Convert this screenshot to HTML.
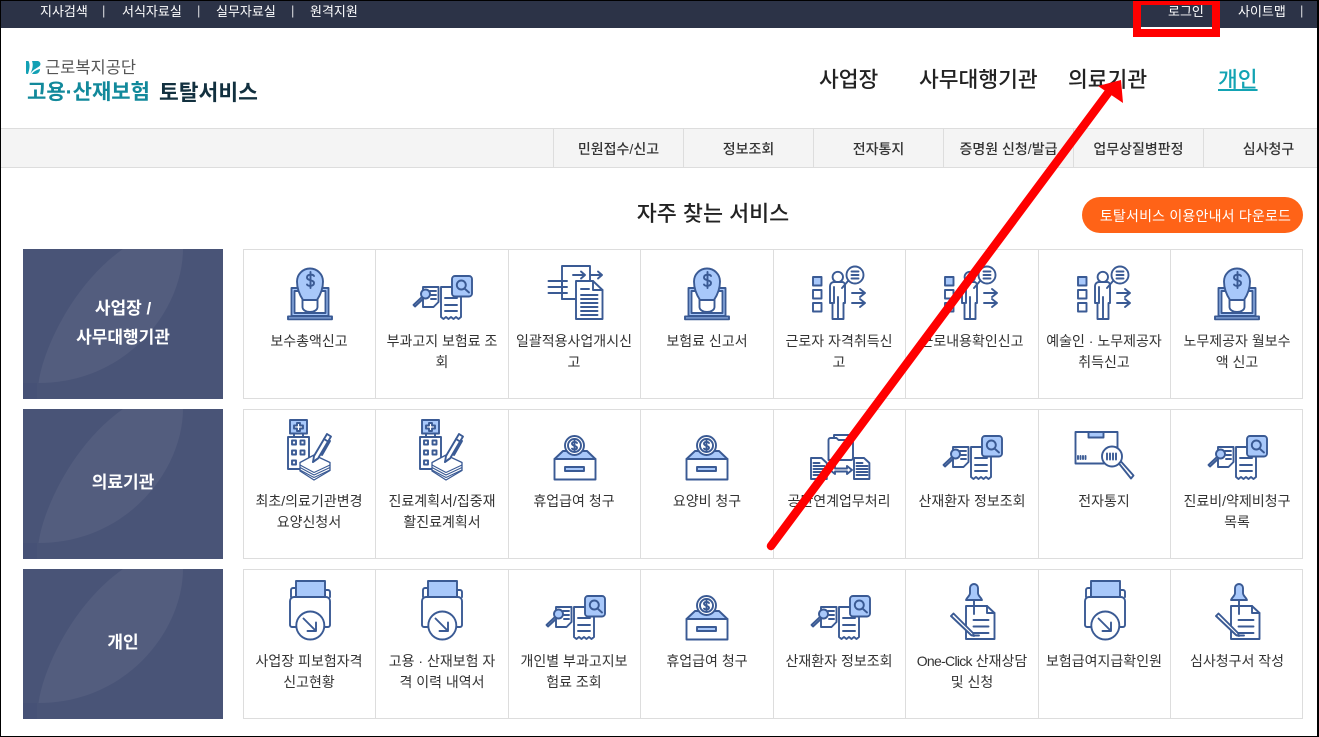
<!DOCTYPE html>
<html lang="ko"><head><meta charset="utf-8"><title>토탈서비스</title>
<style>
*{box-sizing:border-box;margin:0;padding:0}
html,body{width:1319px;height:737px;overflow:hidden;background:#fff}
body{position:relative;font-family:"Liberation Sans","Noto Sans CJK KR",sans-serif;color:#333}
.a{position:absolute;white-space:nowrap}
.top{left:0;top:0;width:1319px;height:28px;background:#2c3347}
.tt{color:#fff;font-size:13px;line-height:20px;top:1px}
.sp{font-size:13px;opacity:.8;top:1px}
.nav{font-size:21.5px;font-weight:500;color:#222;top:65px;line-height:30px}
.tabs{left:0;top:128px;width:1319px;height:40px;background:#f4f4f4;border-top:1px solid #ddd;border-bottom:1px solid #ddd}
.tab{top:129px;height:38px;line-height:38px;font-size:14px;font-weight:500;color:#333;text-align:center;width:130px;border-left:1px solid #ddd}
.panel{left:23px;width:200px;height:150px;background:#495477;color:#fff;font-size:17px;font-weight:700;text-align:center;line-height:29px}
.panel svg{position:absolute;left:0;top:0}
.panel div{position:absolute;left:0;width:200px;white-space:nowrap}
.row{left:243px;width:1060px;height:150px;border:1px solid #ddd;display:flex;background:#fff}
.c{flex:0 0 132px;border-right:1px solid #ddd;text-align:center;position:relative;font-size:14px;line-height:21px;color:#333}
.c:nth-child(even){flex-basis:133px}
.c:last-child{border-right:0;flex:1 1 auto}
.c svg{position:absolute;left:25.5px;top:7px}
.c p{position:absolute;left:-1px;width:132px;top:81px;white-space:nowrap}
.c:nth-child(even) p{left:0}
svg .s{fill:none;stroke:#3a5a94;stroke-width:1.9;stroke-linejoin:round;stroke-linecap:round}
svg .f{fill:#a8c8fa;stroke:#3a5a94;stroke-width:1.9;stroke-linejoin:round;stroke-linecap:round}
svg .w{fill:#fff;stroke:#3a5a94;stroke-width:1.9;stroke-linejoin:round;stroke-linecap:round}
</style></head><body>
<svg width="0" height="0" style="position:absolute">
<symbol id="bulb" viewBox="0 0 80 64">
<rect class="f" x="21.5" y="31" width="37" height="28"/><rect class="w" x="24.5" y="34" width="31" height="22"/>
<path class="f" d="M18 59.5h44v2.8H18z"/>
<path class="w" d="M32.5 42v8a7.5 5 0 0 0 15 0v-8z"/>
<path class="f" d="M33 43C29 37 27 31 27 24.500a13 13 0 0 1 26 0c0 6.500-2 12.500-6 18.500z"/>
<path class="s" d="M44 19c-1-2-7-2-7 1.500S44 22.500 44 26s-6 3.500-7 1.500M40.500 15v16"/>
</symbol>
<symbol id="search" viewBox="0 0 80 64">
<path class="w" d="M21 30h15.500v15l-5 5H21z"/><path class="s" d="M28 34h6M29 38h5M29 42h5"/>
<path class="w" d="M39 30h20v30l-2.500 2-2.500-2-2.500 2-2.500-2-2.500 2-2.500-2-2.500 2-2.500-2z"/>
<path class="s" d="M43 41h12M43 48h12M43 54h12"/>
<rect class="f" x="50" y="19" width="20" height="20.500" rx="3"/>
<circle class="f" cx="59.300" cy="28" r="4.500"/><path class="s" d="M62.500 31.500l4.500 4"/>
<path class="w" d="M20 40l-8.500 8 1.500 1.500 8.500-8z"/><circle class="f" cx="23.500" cy="37" r="4.500"/>
</symbol>
<symbol id="docs" viewBox="0 0 80 64">
<path class="w" d="M27 32V9h28v33H27"/>
<path class="s" d="M13.500 24H32M13.500 30H32M13.500 36H32M27 24v18h14" stroke-width="2.200"/>
<path class="s" d="M38 18h12M46 14.500l4 3.500-4 3.500M56 18h11M63 14.500l4 3.500-4 3.500" stroke-width="2"/>
<path class="w" d="M41 24h17l9.500 9v29H41z"/><path class="s" d="M58 24v9h9.500"/>
<path class="s" d="M46 32h8M46 38h16.500M46 42h16.500M46 46h16.500M46 50h16.500M46 54h16.500M46 58h16.500" stroke-width="2"/>
</symbol>
<symbol id="person" viewBox="0 0 80 64">
<rect class="f" x="13" y="20" width="8.500" height="8.500"/><rect class="w" x="13" y="33" width="8.500" height="8.500"/><rect class="w" x="13" y="46" width="8.500" height="8.500"/>
<circle class="w" cx="37.800" cy="20" r="5.200"/>
<path class="w" d="M30 46V29a4 4 0 0 1 4-4h8a3 3 0 0 1 3 3v18h-1.500V62H32.500V46z"/><path class="s" d="M38 40v22M34 30v16M42 31l6-7"/>
<circle class="w" cx="55" cy="18" r="8.500"/><path class="s" d="M51.500 14.500h7M51.500 18h7M51.500 21.500h7"/>
<path class="s" d="M52 36h13M60 32l5 4-5 4M52 46h13M60 42l5 4-5 4"/>
</symbol>
<symbol id="hosp" viewBox="0 0 80 64">
<rect class="f" x="20" y="3" width="17" height="13.500"/><path class="w" d="M27 6h3v2.500h3v3h-3V14h-3v-2.500h-3v-3h3z"/>
<path class="s" d="M24 17v3M33 17v3"/>
<rect class="w" x="18" y="20" width="21" height="32"/>
<path class="s" d="M22 23.500h4v4h-4zM30.500 23.500h4v4h-4zM22 33.500h4v4h-4zM30.500 33.500h4v4h-4zM22 43.500h4v4h-4z"/>
<path class="w" d="M44 38l16 7.500v8L44 63l-14-9v-8.500z" style="stroke-width:1.300"/>
<path class="s" d="M30 48l14 7.500 16-7.500M30 50.500l14 7.500 16-7.500M30 53l14 7.500 16-7.500" style="stroke-width:1.100"/>
<path class="w" d="M43 45l1-6L57 17l4 2.500-13 22z"/><path class="s" d="M54 22l4 2.500M60 24l-8 14M43 45l4-3"/>
</symbol>
<symbol id="box" viewBox="0 0 80 64">
<path class="f" d="M28 34h24l8.400 8H19.500z"/>
<path class="s" d="M33 34h14"/>
<circle class="w" cx="39.500" cy="28.500" r="9.500"/><circle class="s" cx="39.500" cy="28.500" r="6.500"/>
<path class="s" d="M42 26c-1-1.500-5-1.500-5 .8s5 1.700 5 4-4 2-5 .8M39.500 23.500v10"/>
<rect class="w" x="19.500" y="42" width="41" height="20.500"/>
<rect class="f" x="30" y="50" width="19" height="4"/>
</symbol>
<symbol id="share" viewBox="0 0 80 64">
<path class="w" d="M34 18h17v25H34z"/>
<path class="w" d="M28.500 23a2 2 0 0 1 2-2h6l2 2h12.500a2 2 0 0 1 2 2v16a2 2 0 0 1-2 2H28.500z"/>
<path class="w" d="M11 41h10.500l5.300 5v16H11z"/><path class="s" d="M13.500 46h6M13.500 49h11M13.500 52h11M13.500 55h11M13.500 58h11" stroke-width="1.700"/>
<path class="w" d="M54 41h10l5.400 5v16H54z"/><path class="s" d="M56.500 46h6M56.500 49h11M56.500 52h11M56.500 55h11M56.500 58h11" stroke-width="1.700"/>
<path class="w" d="M30 53l5-4v2.500h12V49l5 4-5 4v-2.500H35V57z"/>
</symbol>
<symbol id="parcel" viewBox="0 0 80 64">
<rect class="w" x="10.500" y="15" width="42" height="31.500"/>
<rect class="f" x="23.500" y="15" width="15" height="5.500"/>
<path class="s" d="M13 42v-3M15.500 42v-3M18 42v-3M20.500 42v-3" stroke-width="1.500"/>
<circle class="w" cx="47" cy="39.500" r="10"/>
<path class="s" d="M42 36.500v6M45 36.500v6M48 36.500v6M51 36.500v6"/>
<path class="w" d="M54 46.500l2-2 12.500 14-2.500 3z"/>
</symbol>
<symbol id="print" viewBox="0 0 80 64">
<path class="s" d="M26 20v-9h-3a2 2 0 0 0-2 2v7M55 20v-7h3a2 2 0 0 1 2 2v5"/>
<rect class="f" x="26" y="4" width="29" height="16"/>
<path class="w" d="M20 24a4 4 0 0 1 4-4h32a4 4 0 0 1 4 4v24a2 2 0 0 1-2 2H22a2 2 0 0 1-2-2z"/>
<circle class="w" cx="40.300" cy="48.500" r="14"/>
<path class="s" d="M33.500 41.500L46 54M46 45.500V54h-8.500" stroke-width="2.400"/>
</symbol>
<symbol id="pin" viewBox="0 0 80 64">
<path class="w" d="M34 29h21l7.500 7v26H34z"/><path class="s" d="M55 29v7h7.500M41.500 43h15M41.500 49.500h15M41.500 56h15"/>
<path class="f" d="M38 11a4 4 0 0 1 8 0v5c0 3 3 4 4 7H34c1-3 4-4 4-7z"/><path class="s" d="M42 24v13"/>
<path class="w" d="M19 39l2.500-2.500L41 56l1 3-3-1z"/><path class="s" d="M40 58.500h7"/>
</symbol>
</svg>

<div class="a top"></div>
<div class="a tt" style="left:40px;top:2px">지사검색</div><div class="a tt sp" style="left:102px">|</div>
<div class="a tt" style="left:122px;top:2px">서식자료실</div><div class="a tt sp" style="left:197px">|</div>
<div class="a tt" style="left:216px;top:2px">실무자료실</div><div class="a tt sp" style="left:291px">|</div>
<div class="a tt" style="left:310px;top:2px">원격지원</div>
<div class="a tt" style="left:1168px;top:2px">로그인</div>
<div class="a tt" style="left:1238px;top:2px">사이트맵</div><div class="a tt sp" style="left:1300px">|</div>
<div class="a" style="left:1141px;top:27px;width:71px;height:2px;background:#fff"></div>

<svg class="a" style="left:26px;top:60px" width="15" height="15" viewBox="0 0 15 15"><path fill="#12a0b4" d="M0 1h2.500c1.500 3 1.500 7-.5 13H1a1 1 0 0 1-1-1zM6 1h6a3 3 0 0 1 2 4.500C12 8 8 8.500 4.500 13.500 6.500 9 7.500 5 6 1zM6 14C7.500 11.500 10 10 14 9c0 3-2 5-5 5z"/></svg>
<div class="a" style="left:45px;top:57px;font-size:16.5px;line-height:22px;color:#555">근로복지공단</div>
<div class="a" style="left:27px;top:78px;font-size:21px;line-height:30px;font-weight:700;color:#12899b">고용·산재보험</div>
<div class="a" style="left:159px;top:78px;font-size:21.500px;line-height:30px;font-weight:700;color:#12303f">토탈서비스</div>

<div class="a nav" style="left:819px">사업장</div>
<div class="a nav" style="left:919px">사무대행기관</div>
<div class="a nav" style="left:1068px">의료기관</div>
<div class="a nav" style="left:1218px;color:#12a3b3;text-decoration:underline">개인</div>

<div class="a tabs"></div>
<div class="a tab" style="left:553px;padding-top:1px">민원접수/신고</div>
<div class="a tab" style="left:683px;padding-top:1px">정보조회</div>
<div class="a tab" style="left:813px;padding-top:1px">전자통지</div>
<div class="a tab" style="left:943px;padding-top:1px">증명원 신청/발급</div>
<div class="a tab" style="left:1073px;padding-top:1px">업무상질병판정</div>
<div class="a tab" style="left:1203px;padding-top:1px">심사청구</div>

<div class="a" style="left:0;top:199px;width:1426px;text-align:center;font-size:21.8px;font-weight:500;line-height:30px;color:#222">자주 찾는 서비스</div>
<div class="a" style="left:1082px;top:197px;width:221px;height:36px;border-radius:18px;background:#ff6317;color:#fff;font-size:14px;letter-spacing:.2px;line-height:38px;text-align:center;padding-left:6px">토탈서비스 이용안내서 다운로드</div>

<div class="a panel" style="top:249px"><svg width="200" height="150"><path fill="#535d7e" d="M100 0C50 35 20 100 15.500 134C105 134 160 60 160 0Z"/><rect y="134" width="14" height="16" fill="#465176"/></svg><div style="top:45px">사업장 /</div><div style="top:74px">사무대행기관</div></div>
<div class="a panel" style="top:409px"><svg width="200" height="150"><path fill="#535d7e" d="M100 0C50 35 20 100 15.500 134C105 134 160 60 160 0Z"/><rect y="134" width="14" height="16" fill="#465176"/></svg><div style="top:59px">의료기관</div></div>
<div class="a panel" style="top:569px"><svg width="200" height="150"><path fill="#535d7e" d="M100 0C50 35 20 100 15.500 134C105 134 160 60 160 0Z"/><rect y="134" width="14" height="16" fill="#465176"/></svg><div style="top:59px">개인</div></div>

<div class="a row" style="top:249px">
<div class="c"><svg width="80" height="64"><use href="#bulb"/></svg><p>보수총액신고</p></div>
<div class="c"><svg width="80" height="64"><use href="#search"/></svg><p>부과고지 보험료 조<br>회</p></div>
<div class="c"><svg width="80" height="64"><use href="#docs"/></svg><p>일괄적용사업개시신<br>고</p></div>
<div class="c"><svg width="80" height="64"><use href="#bulb"/></svg><p>보험료 신고서</p></div>
<div class="c"><svg width="80" height="64"><use href="#person"/></svg><p>근로자 자격취득신<br>고</p></div>
<div class="c"><svg width="80" height="64"><use href="#person"/></svg><p>근로내용확인신고</p></div>
<div class="c"><svg width="80" height="64"><use href="#person"/></svg><p>예술인 · 노무제공자<br>취득신고</p></div>
<div class="c"><svg width="80" height="64"><use href="#bulb"/></svg><p>노무제공자 월보수<br>액 신고</p></div>
</div>
<div class="a row" style="top:409px">
<div class="c"><svg width="80" height="64"><use href="#hosp"/></svg><p>최초/의료기관변경<br>요양신청서</p></div>
<div class="c"><svg width="80" height="64"><use href="#hosp"/></svg><p>진료계획서/집중재<br>활진료계획서</p></div>
<div class="c"><svg width="80" height="64"><use href="#box"/></svg><p>휴업급여 청구</p></div>
<div class="c"><svg width="80" height="64"><use href="#box"/></svg><p>요양비 청구</p></div>
<div class="c"><svg width="80" height="64"><use href="#share"/></svg><p>공단연계업무처리</p></div>
<div class="c"><svg width="80" height="64"><use href="#search"/></svg><p>산재환자 정보조회</p></div>
<div class="c"><svg width="80" height="64"><use href="#parcel"/></svg><p>전자통지</p></div>
<div class="c"><svg width="80" height="64"><use href="#search"/></svg><p>진료비/약제비청구<br>목록</p></div>
</div>
<div class="a row" style="top:569px">
<div class="c"><svg width="80" height="64"><use href="#print"/></svg><p>사업장 피보험자격<br>신고현황</p></div>
<div class="c"><svg width="80" height="64"><use href="#print"/></svg><p>고용 · 산재보험 자<br>격 이력 내역서</p></div>
<div class="c"><svg width="80" height="64"><use href="#search"/></svg><p>개인별 부과고지보<br>험료 조회</p></div>
<div class="c"><svg width="80" height="64"><use href="#box"/></svg><p>휴업급여 청구</p></div>
<div class="c"><svg width="80" height="64"><use href="#search"/></svg><p>산재환자 정보조회</p></div>
<div class="c"><svg width="80" height="64"><use href="#pin"/></svg><p><span style="letter-spacing:-.7px">One-Click</span> 산재상담<br>및 신청</p></div>
<div class="c"><svg width="80" height="64"><use href="#print"/></svg><p>보험급여지급확인원</p></div>
<div class="c"><svg width="80" height="64"><use href="#pin"/></svg><p>심사청구서 작성</p></div>
</div>

<svg class="a" style="left:0;top:0;pointer-events:none" width="1319" height="737">
<path d="M1133 1h87v36h-87zM1141 5v24h71V5z" fill="#f00" fill-rule="evenodd"/>
<path d="M771 546L1108 93" stroke="#f00" stroke-width="8.500" stroke-linecap="round" fill="none"/>
<path d="M1121 80L1098 86L1123 103Z" fill="#f00"/>
<rect x="0" y="0" width="1319" height="1" fill="#000"/>
<rect x="0" y="0" width="1" height="737" fill="#000"/>
<rect x="1317" y="0" width="2" height="737" fill="#000"/>
<rect x="0" y="736" width="1319" height="1" fill="#000"/>
</svg>
</body></html>
